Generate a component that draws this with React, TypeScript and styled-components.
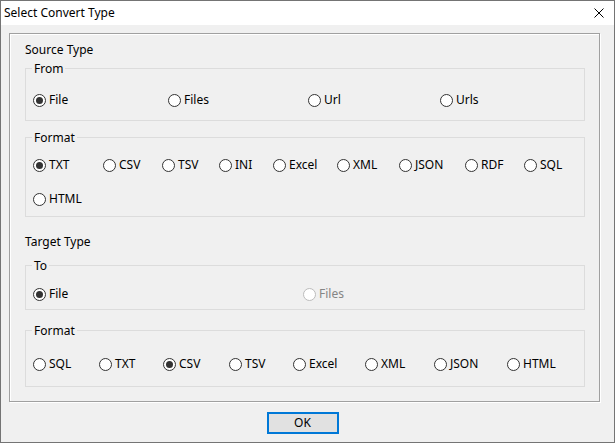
import React from "react";
import styled, { createGlobalStyle } from "styled-components";

const Global = createGlobalStyle`
  html, body { margin: 0; padding: 0; background: #f0f0f0; }
  body {
    font-family: "Noto Sans", "Segoe UI", "Liberation Sans", sans-serif;
    font-size: 12px;
    color: #000;
  }
  * { box-sizing: border-box; }
`;

const Window = styled.div`
  width: 615px;
  height: 443px;
  border: 1px solid #747474;
  background: #f0f0f0;
  display: flex;
  flex-direction: column;
`;

const TitleBar = styled.div`
  height: 24px;
  flex-shrink: 0;
  background: #fff;
  display: flex;
  align-items: center;
  justify-content: space-between;
  padding-left: 3px;
`;

const Title = styled.span`
  font-size: 12px;
  line-height: 16px;
`;

const CloseButton = styled.div`
  width: 30px;
  height: 24px;
  display: flex;
  align-items: center;
  justify-content: center;
`;

const Body = styled.div`
  padding: 8px 14px 0 8px;
`;

const Panel = styled.div`
  height: 369px;
  border: 1px solid #a0a0a0;
  box-shadow: inset 1px 1px 0 #fff, 1px 1px 0 #fff;
  padding: 8px 14px 0 15px;
  display: flex;
  flex-direction: column;
`;

const SectionLabel = styled.div<{ $mt: number }>`
  line-height: 16px;
  margin-top: ${(p) => p.$mt}px;
`;

const Group = styled.fieldset<{ $mt: number; $pt: number; $pb: number; $gap?: number }>`
  margin: ${(p) => p.$mt}px 0 0 0;
  min-width: 0;
  border: 1px solid #dcdcdc;
  padding: ${(p) => p.$pt}px 7px ${(p) => p.$pb}px 7px;
  display: flex;
  flex-direction: column;
  gap: ${(p) => p.$gap ?? 13}px;
`;

const Legend = styled.legend`
  line-height: 15px;
  padding: 0 2px;
  margin-left: -1px;
`;

const Row = styled.div`
  display: flex;
  align-items: center;
  height: 20px;
`;

const Option = styled.label<{ $w?: number; $disabled?: boolean }>`
  display: flex;
  align-items: center;
  gap: 3px;
  width: ${(p) => (p.$w ? `${p.$w}px` : "auto")};
  flex-shrink: 0;
  color: ${(p) => (p.$disabled ? "#858585" : "#000")};
  line-height: 16px;
  white-space: nowrap;
`;

const Circle = styled.span<{ $checked?: boolean; $disabled?: boolean }>`
  width: 13px;
  height: 13px;
  border-radius: 50%;
  border: 1px solid ${(p) => (p.$disabled ? "#bcbcbc" : "#333")};
  background: #fff;
  display: flex;
  align-items: center;
  justify-content: center;
  flex-shrink: 0;
  &::after {
    content: "";
    width: 7px;
    height: 7px;
    border-radius: 50%;
    background: ${(p) => (p.$checked ? "#333" : "transparent")};
  }
`;

const Footer = styled.div`
  flex: 1;
  display: flex;
  align-items: center;
  justify-content: center;
  padding-right: 10px;
`;

const Button = styled.button`
  width: 72px;
  height: 22px;
  border: 2px solid #0078d7;
  background: #e1e1e1;
  font-family: inherit;
  font-size: 12px;
  color: #000;
  padding: 0;
  margin-top: 1px;
`;

type Opt = { label: string; w?: number; checked?: boolean; disabled?: boolean };

const Radio: React.FC<Opt> = ({ label, w, checked, disabled }) => (
  <Option $w={w} $disabled={disabled}>
    <Circle $checked={checked} $disabled={disabled} />
    {label}
  </Option>
);

const RadioRow: React.FC<{ items: Opt[] }> = ({ items }) => (
  <Row>
    {items.map((o) => (
      <Radio key={o.label} {...o} />
    ))}
  </Row>
);

export default function App() {
  return (
    <>
      <Global />
      <Window>
        <TitleBar>
          <Title>Select Convert Type</Title>
          <CloseButton>
            <svg width="10" height="10" viewBox="0 0 10 10">
              <path d="M0.5 0.5 L9.5 9.5 M9.5 0.5 L0.5 9.5" stroke="#000" strokeWidth="1" />
            </svg>
          </CloseButton>
        </TitleBar>
        <Body>
          <Panel>
            <SectionLabel $mt={0}>Source Type</SectionLabel>
            <Group $mt={3} $pt={14} $pb={10}>
              <Legend>From</Legend>
              <RadioRow
                items={[
                  { label: "File", w: 135, checked: true },
                  { label: "Files", w: 140 },
                  { label: "Url", w: 132 },
                  { label: "Urls" },
                ]}
              />
            </Group>
            <Group $mt={9} $pt={10} $pb={7} $gap={14}>
              <Legend>Format</Legend>
              <RadioRow
                items={[
                  { label: "TXT", w: 70, checked: true },
                  { label: "CSV", w: 59 },
                  { label: "TSV", w: 57 },
                  { label: "INI", w: 54 },
                  { label: "Excel", w: 64 },
                  { label: "XML", w: 62 },
                  { label: "JSON", w: 66 },
                  { label: "RDF", w: 59 },
                  { label: "SQL" },
                ]}
              />
              <RadioRow items={[{ label: "HTML" }]} />
            </Group>
            <SectionLabel $mt={17}>Target Type</SectionLabel>
            <Group $mt={8} $pt={11} $pb={5}>
              <Legend>To</Legend>
              <RadioRow
                items={[
                  { label: "File", w: 270, checked: true },
                  { label: "Files", disabled: true },
                ]}
              />
            </Group>
            <Group $mt={13} $pt={16} $pb={12}>
              <Legend>Format</Legend>
              <RadioRow
                items={[
                  { label: "SQL", w: 66 },
                  { label: "TXT", w: 64 },
                  { label: "CSV", w: 66, checked: true },
                  { label: "TSV", w: 64 },
                  { label: "Excel", w: 72 },
                  { label: "XML", w: 69 },
                  { label: "JSON", w: 73 },
                  { label: "HTML" },
                ]}
              />
            </Group>
          </Panel>
        </Body>
        <Footer>
          <Button>OK</Button>
        </Footer>
      </Window>
    </>
  );
}
